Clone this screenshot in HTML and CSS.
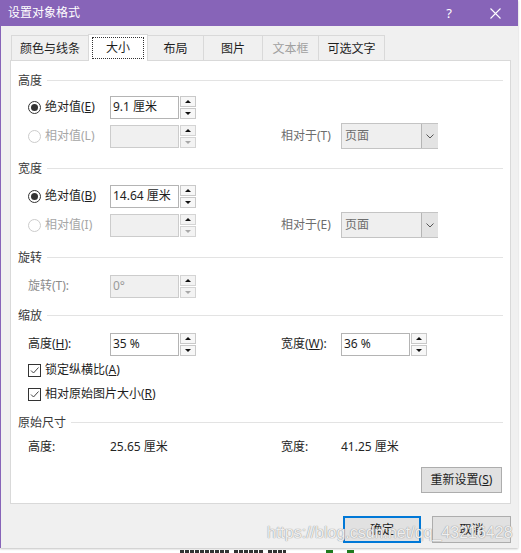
FILE: index.html
```html
<!DOCTYPE html>
<html lang="zh-CN">
<head>
<meta charset="utf-8">
<title>设置对象格式</title>
<link rel="stylesheet" href="styles.css">
</head>
<body>
<div class="dialog">
  <div class="titlebar">
    <span class="title">设置对象格式</span>
    <span class="tb-help">?</span>
    <span class="tb-close"><svg width="11" height="11" viewBox="0 0 11 11"><path d="M0.5 0.5L10.5 10.5M10.5 0.5L0.5 10.5" stroke="#fff" stroke-width="1.1" fill="none"/></svg></span>
  </div>
  <div class="body">
    <div class="tabs">
      <div class="tab t1">颜色与线条</div>
      <div class="tab t2 active"><span class="focus">大小</span></div>
      <div class="tab t3">布局</div>
      <div class="tab t4">图片</div>
      <div class="tab t5 disabled">文本框</div>
      <div class="tab t6">可选文字</div>
    </div>
    <div class="panel">
      <div class="gh mt12"><span>高度</span><i class="rule"></i></div>
      <div class="row mt5">
        <label class="opt"><span class="radio on"></span>绝对值(<u>E</u>)</label>
        <div class="spin"><div class="field">9.1 厘米</div><div class="spinner"><span class="up"></span><span class="down"></span></div></div>
      </div>
      <div class="row mt3">
        <label class="opt dis"><span class="radio"></span>相对值(L)</label>
        <div class="spin off"><div class="field"></div><div class="spinner"><span class="up"></span><span class="down"></span></div></div>
        <span></span>
        <span class="lbl-mid">相对于(T)</span>
        <div class="select"><span class="sel-text">页面</span><span class="sel-btn"><svg width="8" height="5" viewBox="0 0 8 5"><path d="M0.5 0.5L4 4L7.5 0.5" stroke="#555" fill="none"/></svg></span></div>
      </div>

      <div class="gh mt12"><span>宽度</span><i class="rule"></i></div>
      <div class="row mt6">
        <label class="opt"><span class="radio on"></span>绝对值(<u>B</u>)</label>
        <div class="spin"><div class="field">14.64 厘米</div><div class="spinner"><span class="up"></span><span class="down"></span></div></div>
      </div>
      <div class="row mt3">
        <label class="opt dis"><span class="radio"></span>相对值(I)</label>
        <div class="spin off"><div class="field"></div><div class="spinner"><span class="up"></span><span class="down"></span></div></div>
        <span></span>
        <span class="lbl-mid">相对于(E)</span>
        <div class="select"><span class="sel-text">页面</span><span class="sel-btn"><svg width="8" height="5" viewBox="0 0 8 5"><path d="M0.5 0.5L4 4L7.5 0.5" stroke="#555" fill="none"/></svg></span></div>
      </div>

      <div class="gh mt12"><span>旋转</span><i class="rule"></i></div>
      <div class="row mt7">
        <span class="lbl dis2">旋转(T):</span>
        <div class="spin off"><div class="field">0°</div><div class="spinner"><span class="up"></span><span class="down"></span></div></div>
      </div>

      <div class="gh mt9"><span>缩放</span><i class="rule"></i></div>
      <div class="row mt7">
        <span class="lbl">高度(<u>H</u>):</span>
        <div class="spin"><div class="field">35 %</div><div class="spinner"><span class="up"></span><span class="down"></span></div></div>
        <span></span>
        <span class="lbl">宽度(<u>W</u>):</span>
        <div class="spin"><div class="field">36 %</div><div class="spinner"><span class="up"></span><span class="down"></span></div></div>
      </div>
      <label class="check mt3"><span class="box"><svg width="11" height="11" viewBox="0 0 11 11"><path d="M2 5.5L4.5 8L9.5 2.5" stroke="#444" stroke-width="1" fill="none"/></svg></span>锁定纵横比(<u>A</u>)</label>
      <label class="check mt4"><span class="box"><svg width="11" height="11" viewBox="0 0 11 11"><path d="M2 5.5L4.5 8L9.5 2.5" stroke="#444" stroke-width="1" fill="none"/></svg></span>相对原始图片大小(<u>R</u>)</label>

      <div class="gh mt11"><span>原始尺寸</span><i class="rule"></i></div>
      <div class="row short mt6">
        <span class="lbl">高度:</span>
        <span class="val">25.65 厘米</span>
        <span></span>
        <span class="lbl">宽度:</span>
        <span class="val">41.25 厘米</span>
      </div>
      <div class="reset-row">
        <button class="btn reset">重新设置(<u>S</u>)</button>
      </div>
    </div>
    <div class="actions">
      <button class="btn primary">确定</button>
      <button class="btn">取消</button>
    </div>
  </div>
  <div class="watermark">https://blog.csdn.net/qq_43216428</div>
</div>
<div class="under">
  <span class="frag f1"></span><span class="frag f2"></span><span class="frag f3"></span>
  <span class="sq s1"></span><span class="sq s2"></span>
</div>
</body>
</html>
```

FILE: styles.css
```css
* { box-sizing: border-box; }
html, body { margin: 0; padding: 0; background: #fff; }
body {
  width: 521px;
  height: 553px;
  overflow: hidden;
  font-family: "Noto Sans", "Noto Sans CJK SC", sans-serif;
  font-size: 12px;
  line-height: 16px;
  color: #1e1e1e;
}
u { text-decoration: underline; text-underline-offset: 1px; }

.dialog {
  position: relative;
  width: 518px;
  height: 548px;
  background: #f0f0f0;
  border-left: 1px solid #8764b8;
  box-shadow: 0 1px 2px rgba(0,0,0,0.25);
}
.titlebar {
  height: 26px;
  background: #8764b8;
  color: #fff;
  display: flex;
  align-items: center;
  padding-left: 7px;
}
.title { flex: 1; font-size: 12px; letter-spacing: 0; }
.tb-help { width: 8px; margin-right: 37px; text-align: center; font-size: 13px; font-family: "Noto Sans", sans-serif; }
.tb-close { width: 11px; height: 11px; margin-right: 17px; display: flex; }

.body { padding: 9px 7px 0 9px; }

.tabs {
  display: flex;
  align-items: flex-end;
  height: 25px;
  padding-left: 1px;
}
.tab {
  height: 25px;
  border: 1px solid #d9d9d9;
  border-bottom: none;
  border-right: none;
  background: #f0f0f0;
  display: flex;
  align-items: center;
  justify-content: center;
  padding-top: 2px;
  color: #1e1e1e;
}
.t1 { width: 77px; }
.t2 { width: 60px; }
.t3 { width: 56px; }
.t4 { width: 59px; }
.t5 { width: 56px; }
.t6 { width: 67px; border-right: 1px solid #d9d9d9; }
.tab.disabled { color: #a0a0a0; }
.tab.active {
  position: relative;
  z-index: 1;
  height: 27px;
  margin-bottom: -1px;
  margin-right: -1px;
  background: #fff;
  border-right: 1px solid #d9d9d9;
  padding: 2px 3px 2px 3px;
}
.focus {
  flex: 1;
  align-self: stretch;
  border: 1px dotted #333;
  display: flex;
  align-items: center;
  justify-content: center;
}

.panel {
  position: relative;
  height: 444px;
  width: 501px;
  background: #fff;
  border: 1px solid #d9d9d9;
  padding: 0 7px;
}

.gh {
  display: flex;
  align-items: center;
  height: 16px;
  color: #3a3a3a;
}
.gh .rule {
  flex: 1;
  height: 1px;
  background: #e3e3e3;
  margin-left: 5px;
  margin-top: -2px;
}

.mt3 { margin-top: 3px; }
.mt4 { margin-top: 4px; }
.mt5 { margin-top: 5px; }
.mt6 { margin-top: 6px; }
.mt7 { margin-top: 7px; }
.mt9 { margin-top: 9px; }
.mt11 { margin-top: 11px; }
.mt12 { margin-top: 12px; }

.row {
  display: grid;
  grid-template-columns: 82px 86px 85px 60px 97px;
  align-items: center;
  height: 26px;
  margin-left: 10px;
}
.row.short { height: 20px; }

.opt { display: flex; align-items: center; }
.opt.dis { color: #a6a6a6; }
.lbl { color: #1e1e1e; }
.lbl.dis2 { color: #8c8c8c; }
.lbl-mid { color: #6d6d6d; }
.val { color: #262626; }

.radio {
  position: relative;
  width: 13px;
  height: 13px;
  border-radius: 50%;
  border: 1px solid #cccccc;
  background: #fff;
  margin-right: 4px;
  flex: none;
}
.radio.on { border-color: #333; }
.radio.on::after {
  content: "";
  position: absolute;
  left: 2px;
  top: 2px;
  width: 7px;
  height: 7px;
  border-radius: 50%;
  background: #333;
}

.spin { display: flex; height: 23px; }
.field {
  width: 69px;
  height: 23px;
  border: 1px solid #b4b4b4;
  background: #fff;
  padding-left: 2px;
  display: flex;
  align-items: center;
  color: #1e1e1e;
  white-space: nowrap;
}
.spin.off .field { background: #f0f0f0; border-color: #cccccc; color: #9a9a9a; }
.spinner {
  width: 16px;
  height: 23px;
  margin-left: 1px;
  display: flex;
  flex-direction: column;
  gap: 1px;
}
.spinner span {
  flex: 1;
  border: 1px solid #c9c9c9;
  background: #f7f7f7;
  display: flex;
  align-items: center;
  justify-content: center;
}
.spinner .up::before {
  content: "";
  border-left: 3px solid transparent;
  border-right: 3px solid transparent;
  border-bottom: 3px solid #111;
}
.spinner .down::before {
  content: "";
  border-left: 3px solid transparent;
  border-right: 3px solid transparent;
  border-top: 3px solid #111;
}
.spin.off .spinner span { background: #f3f3f3; border-color: #d4d4d4; }
.spin.off .spinner .down::before { border-top-color: #a8a8a8; }

.select {
  width: 97px;
  height: 26px;
  border: 1px solid #c4c4c4;
  background: #efefef;
  display: flex;
  align-items: center;
}
.sel-text { flex: 1; padding-left: 3px; color: #6d6d6d; }
.sel-btn {
  width: 17px;
  height: 24px;
  border-left: 1px solid #b5b5b5;
  background: #e3e3e3;
  display: flex;
  align-items: center;
  justify-content: center;
  margin-right: -1px;
}

.check {
  display: flex;
  align-items: center;
  height: 20px;
  margin-left: 10px;
}
.check .box {
  width: 13px;
  height: 13px;
  border: 1px solid #333;
  background: #fff;
  margin-right: 4px;
  display: flex;
  align-items: center;
  justify-content: center;
}

.reset-row {
  display: flex;
  justify-content: flex-end;
  margin-top: 10px;
  padding-right: 1px;
}

.btn {
  font-family: "Noto Sans", "Noto Sans CJK SC", sans-serif;
  font-size: 12px;
  line-height: 16px;
  color: #1e1e1e;
  background: #e1e1e1;
  border: 1px solid #adadad;
  padding: 0;
  margin: 0;
  display: flex;
  align-items: center;
  justify-content: center;
}
.reset { width: 81px; height: 26px; }

.actions {
  display: flex;
  justify-content: flex-end;
  gap: 11px;
  margin-top: 12px;
}
.actions .btn { width: 79px; height: 27px; }
.actions .btn.primary { width: 78px; border: 2px solid #0078d7; }

.watermark {
  position: absolute;
  left: 266px;
  top: 524px;
  font-family: "Liberation Sans", Arial, sans-serif;
  font-size: 16px;
  line-height: 18px;
  color: rgba(255,255,255,0.85);
  text-shadow: 0 0 1px #9a9a9a, 0 0 1px #9a9a9a;
  white-space: nowrap;
  pointer-events: none;
}

.under {
  position: relative;
  height: 5px;
}
.frag {
  position: absolute;
  top: 2px;
  height: 3px;
  background: repeating-linear-gradient(90deg, #333 0 4px, #fff 4px 5px);
}
.f1 { left: 180px; width: 50px; }
.f2 { left: 234px; width: 30px; }
.f3 { left: 268px; width: 18px; }
.sq {
  position: absolute;
  top: 2px;
  width: 7px;
  height: 3px;
  background: #1f7a1f;
}
.s1 { left: 326px; }
.s2 { left: 347px; }
```
